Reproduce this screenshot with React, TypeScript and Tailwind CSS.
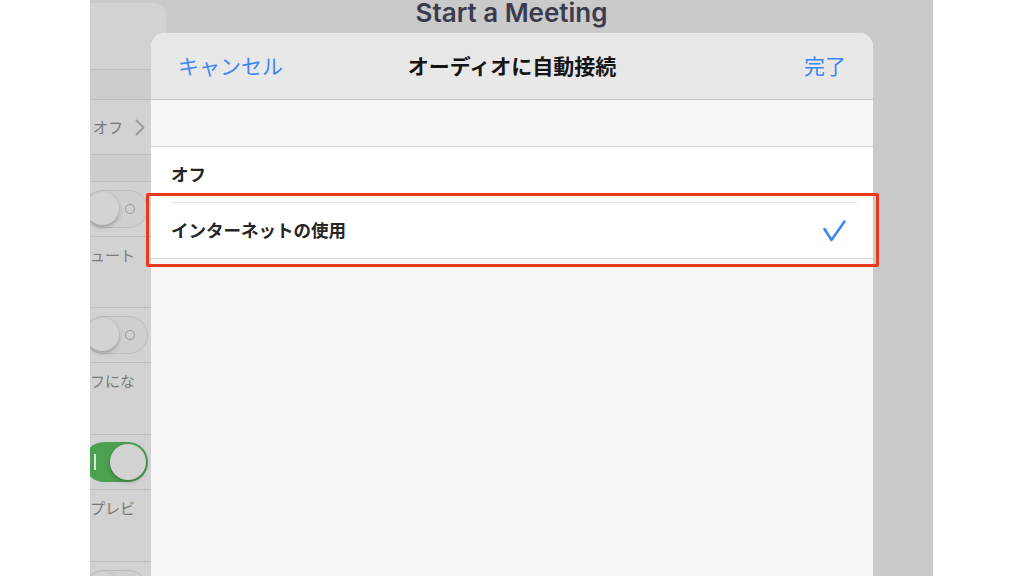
import React from "react";

const jp = { fontFamily: '"Noto Sans CJK JP", "Noto Sans", sans-serif' };

function OffToggle() {
  return (
    <div className="relative shrink-0 w-[64px] h-[38px] rounded-full bg-[#cfcfcf] border-[1.5px] border-[#bcbcbc]">
      <div className="absolute left-[1px] top-[1px] w-[33px] h-[33px] rounded-full bg-[#d3d3d3] shadow-[0_2px_4px_rgba(0,0,0,0.25)]" />
      <div className="absolute right-[12px] top-[13px] w-[10px] h-[10px] rounded-full border-[1.5px] border-[#9a9a9a]" />
    </div>
  );
}

function OnToggle() {
  return (
    <div className="relative shrink-0 w-[64px] h-[40px] rounded-full bg-[#4ba150]">
      <div className="absolute left-[10px] top-[12px] w-[2px] h-[16px] bg-[#d8e8d8]" />
      <div className="absolute right-[2px] top-[2px] w-[36px] h-[36px] rounded-full bg-[#d3d3d3] shadow-[0_2px_4px_rgba(0,0,0,0.25)]" />
    </div>
  );
}

function ToggleRow({ on }: { on?: boolean }) {
  return (
    <div className="h-[55px] border-b border-[#bdbdbd] flex items-center justify-end pr-[18px]">
      {on ? <OnToggle /> : <OffToggle />}
    </div>
  );
}

function DescRow({ text, h }: { text: string; h: string }) {
  return (
    <div className={`${h} border-b border-[#bdbdbd] pt-[9px] text-[15px] leading-[18px] text-[#7a7a7a] whitespace-nowrap`} style={jp}>
      {text}
    </div>
  );
}

export default function App() {
  return (
    <div className="relative w-[1024px] h-[576px] bg-white flex overflow-hidden">
      <div className="relative ml-[90px] w-[843px] h-full overflow-hidden bg-[#cacaca]">
        {/* underlying screen */}
        <div className="flex items-start">
          <div className="mt-[3px] w-[76px] shrink-0 rounded-tr-[12px] bg-[#d2d2d2] flex flex-col">
            <div className="h-[67px] border-b border-[#bdbdbd]" />
            <div className="h-[30px] border-b border-[#bdbdbd] bg-[#cdcdcd]" />
            <div className="h-[55px] border-b border-[#bdbdbd] flex items-center justify-end pr-[21px] gap-[12px] whitespace-nowrap">
              <span className="text-[15px] text-[#777]" style={jp}>オフ</span>
              <svg width="10" height="17" viewBox="0 0 10 17" className="shrink-0">
                <polyline points="1.5,1.5 8.5,8.5 1.5,15.5" fill="none" stroke="#9a9a9a" strokeWidth="1.8" strokeLinecap="round" strokeLinejoin="round" />
              </svg>
            </div>
            <div className="h-[27px] border-b border-[#bdbdbd] bg-[#cdcdcd]" />
            <ToggleRow />
            <DescRow text="ュート" h="h-[71px]" />
            <ToggleRow />
            <DescRow text="フにな" h="h-[72px]" />
            <ToggleRow on />
            <DescRow text="プレビ" h="h-[72px]" />
            <ToggleRow />
          </div>
          <div className="flex-1 pr-[76px] text-center">
            <div
              className="text-[26px] leading-[26px] font-semibold text-[#3a3b4c]"
              style={{ fontFamily: 'Inter, "Noto Sans", sans-serif' }}
            >
              Start a Meeting
            </div>
          </div>
        </div>

        {/* modal sheet */}
        <div className="absolute left-[61px] top-[33px] w-[722px] bottom-0 rounded-t-[14px] overflow-hidden bg-[#f7f7f7] flex flex-col" style={jp}>
          <div className="h-[67px] shrink-0 bg-[#e8e8e9] border-b border-[#c9c9c9] flex items-center px-[27px]">
            <div className="flex-1 text-[21px] text-[#3f86f2]">キャンセル</div>
            <div className="text-[21px] font-bold text-[#141414]">オーディオに自動接続</div>
            <div className="flex-1 text-right text-[21px] text-[#3f86f2]">完了</div>
          </div>
          <div className="h-[47px] shrink-0 border-b border-[#d9d9d9]" />
          <div className="bg-white border-b border-[#d9d9d9]">
            <div className="h-[55px] flex items-center pl-[20px] text-[17.5px] font-bold text-[#262626]">オフ</div>
            <div className="ml-[20px] mr-[16px] h-px bg-[#e3e3e3]" />
            <div className="h-[55px] flex items-center justify-between pl-[20px] pr-[27px]">
              <span className="text-[17.5px] font-bold text-[#262626]">インターネットの使用</span>
              <svg width="23" height="22" viewBox="0 0 23 22">
                <polyline points="1.5,9 8.5,20 21.5,1.5" fill="none" stroke="#3f86f2" strokeWidth="2.6" strokeLinecap="round" strokeLinejoin="round" />
              </svg>
            </div>
          </div>
        </div>
      </div>

      {/* red annotation box */}
      <div className="absolute left-[146px] top-[193px] w-[733px] h-[74px] border-[3px] border-[#e8391f] rounded-[2px]" />
    </div>
  );
}
